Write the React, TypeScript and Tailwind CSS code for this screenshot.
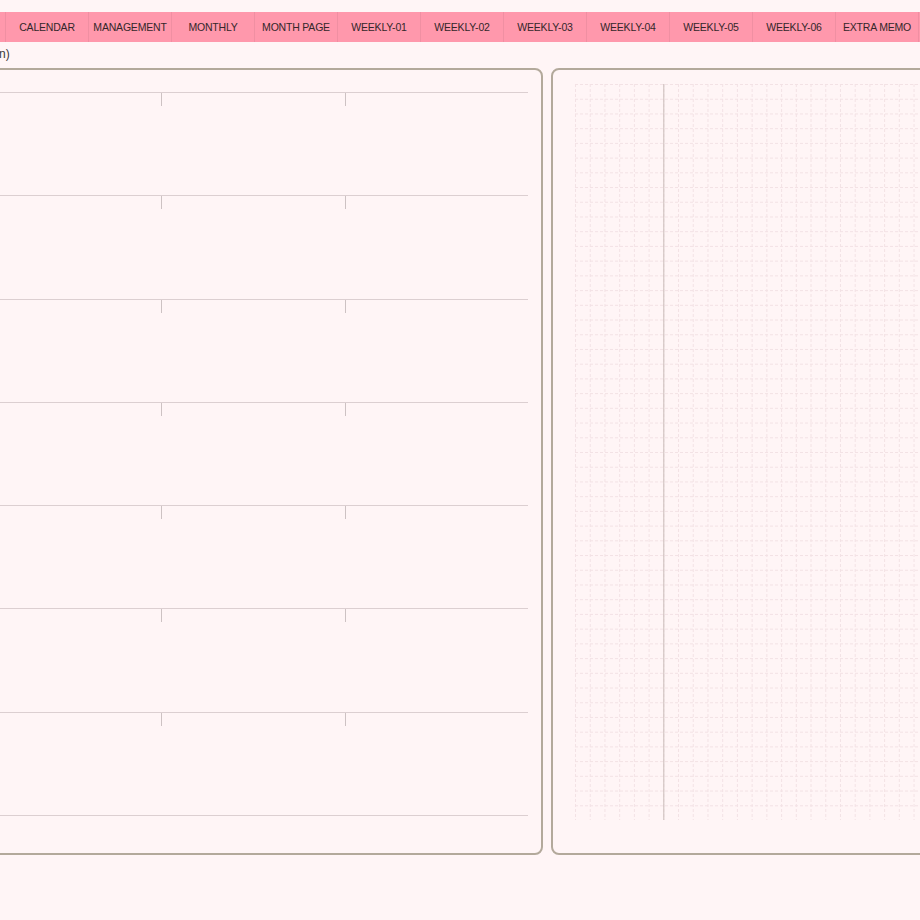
import React from "react";

const TABS = [
  "",
  "CALENDAR",
  "MANAGEMENT",
  "MONTHLY",
  "MONTH PAGE",
  "WEEKLY-01",
  "WEEKLY-02",
  "WEEKLY-03",
  "WEEKLY-04",
  "WEEKLY-05",
  "WEEKLY-06",
  "EXTRA MEMO",
  "",
];

const ROWS = 7;
const CELL = 14.72;
const GRID_COLS = 24;
const GRID_ROWS = 50;

function TabBar() {
  return (
    <div className="mt-[12px] h-[30px] flex bg-[#ff98ac] -ml-[77px] w-max">
      {TABS.map((label, i) => (
        <div
          key={i}
          className="w-[83px] h-full shrink-0 flex items-center justify-center pt-[2px] border-r border-[#f08fa2] text-[10.5px] text-[#33272a] tracking-[-0.2px]"
        >
          {label}
        </div>
      ))}
    </div>
  );
}

function TimeRow() {
  return (
    <div className="h-[103.3px] border-t border-[#dccfd1]">
      <div className="flex h-[13px]">
        <div className="w-[176px]" />
        <div className="w-px bg-[#cdc2c3]" />
        <div className="w-[183px]" />
        <div className="w-px bg-[#cdc2c3]" />
      </div>
    </div>
  );
}

function DotGrid() {
  const w = GRID_COLS * CELL;
  const h = GRID_ROWS * CELL;
  return (
    <svg width={w} height={h} className="block">
      {Array.from({ length: GRID_COLS + 1 }, (_, i) => (
        <line
          key={"v" + i}
          x1={i * CELL + 0.5}
          y1={0}
          x2={i * CELL + 0.5}
          y2={h}
          stroke="#f3e2e5"
          strokeWidth={1}
          strokeDasharray="3 2"
        />
      ))}
      {Array.from({ length: GRID_ROWS + 1 }, (_, i) => (
        <line
          key={"h" + i}
          x1={0}
          y1={i * CELL + 0.5}
          x2={w}
          y2={i * CELL + 0.5}
          stroke="#f3e2e5"
          strokeWidth={1}
          strokeDasharray="3 2"
        />
      ))}
      <line x1={6 * CELL + 0.5} y1={0} x2={6 * CELL + 0.5} y2={h} stroke="#c9bdb9" strokeWidth={1} />
    </svg>
  );
}

export default function App() {
  return (
    <div className="w-[920px] h-[920px] overflow-hidden bg-[#fff5f6] font-['Liberation_Sans',Arial,sans-serif]">
      <TabBar />
      <div className="h-[26px] pt-[4px] text-[12px] leading-[16px] text-[#3a3a3a] -ml-[1px]">n)</div>
      <div className="flex gap-[8px] -ml-[17px]">
        <div className="w-[560px] h-[787px] shrink-0 border-2 border-[#b3a99b] rounded-[8px] pt-[22px] pr-[13px]">
          {Array.from({ length: ROWS }, (_, i) => (
            <TimeRow key={i} />
          ))}
          <div className="border-t border-[#dccfd1]" />
        </div>
        <div className="w-[420px] h-[787px] shrink-0 border-2 border-[#b3a99b] rounded-[8px] pt-[14px] pl-[22px]">
          <DotGrid />
        </div>
      </div>
    </div>
  );
}
